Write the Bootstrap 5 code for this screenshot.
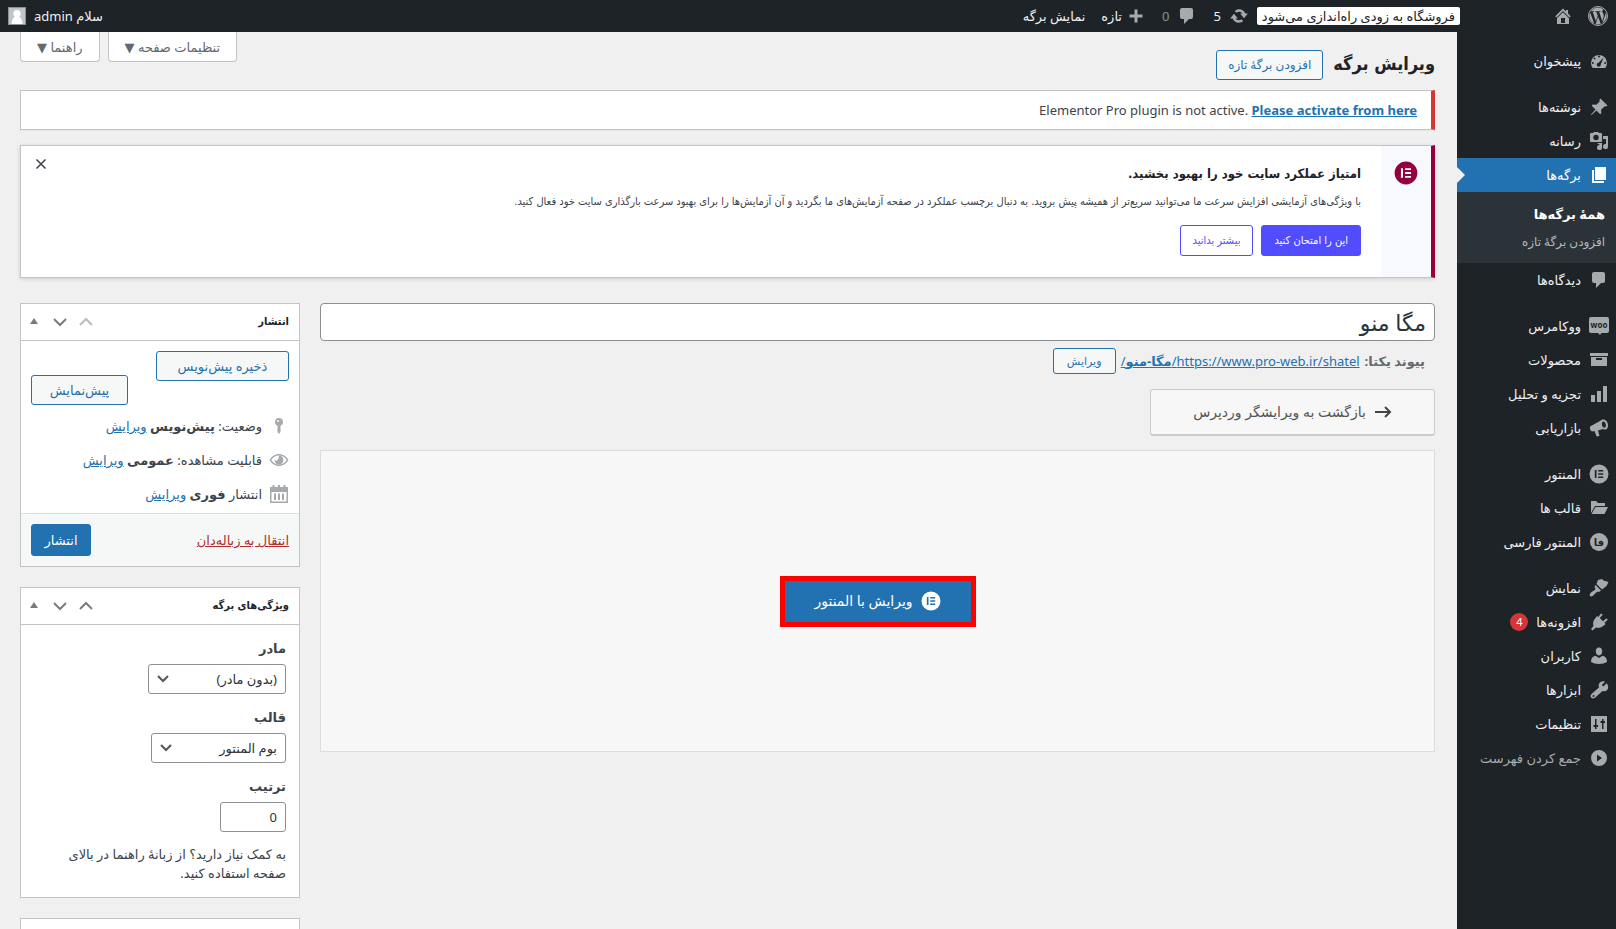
<!DOCTYPE html>
<html lang="fa" dir="rtl">
<head>
<meta charset="utf-8">
<meta name="viewport" content="width=device-width, initial-scale=1">
<title>ویرایش برگه</title>
<link rel="stylesheet" href="https://cdn.jsdelivr.net/npm/bootstrap@5.3.0/dist/css/bootstrap.min.css">
<style>
:root{--ink:#1d2327;--accent:#2271b1;--line:#c3c4c7;--narrow:"DejaVu Sans Condensed","DejaVu Sans",sans-serif}
body{background:#f0f0f1;color:#3c434a;font:13px/20px "Noto Sans","DejaVu Sans",sans-serif}
a{color:var(--accent)}
.ico{width:20px;height:20px;fill:#a7aaad;flex:none}
.topbar{height:32px;background:var(--ink);color:#f0f0f1;padding:0 8px;flex:none}
.topbar a{color:#f0f0f1;text-decoration:none}
.home-pair{width:148px;gap:15px}
.site-status{background:#fff;color:#1d2327!important;border-radius:2px;padding:0 5px;line-height:18px}
.avatar{width:18px;height:18px;background:#c3c4c7;border:1px solid #8c8f94}
.side{width:159px;flex:none;background:var(--ink);padding-top:12px}
.side ul{list-style:none;margin:0;padding:0}
.side a{display:flex;align-items:center;gap:8px;height:34px;padding:0 7px;color:#f0f0f1;text-decoration:none}
.side .gap-top{margin-top:12px}
.side .current{background:var(--accent);color:#fff;position:relative}
.side .current .ico{fill:#fff}
.side .current::after{content:"";position:absolute;left:0;top:9px;border:8px solid transparent;border-left-color:#f0f0f1}
.side .sub{background:#2c3338;padding:8px 0 7px}
.side .sub a{height:28px;padding:0 11px;color:#b4b9be;font-size:12px}
.side .sub a.on{color:#fff;font-weight:700;font-size:13px}
.side .collapse-link{color:#a7aaad}
.count{background:#d63638;color:#fff;width:18px;height:18px;border-radius:9px;font-size:11px;line-height:18px;text-align:center}
.main{padding:0 22px 0 20px}
.meta-tab{background:#fff;border:1px solid var(--line);border-top:0;border-radius:0 0 4px 4px;color:#646970;height:30px;padding:0 16px;font-size:13px}
.page-head{height:58px;padding-top:18px;gap:10px}
.page-head h1{font:700 18px/28px var(--narrow);color:var(--ink);margin:0}
.wpbtn{border:1px solid var(--accent);border-radius:3px;background:#f6f7f7;color:var(--accent);height:30px;padding:0 11px;font-size:12px;line-height:28px;text-decoration:none;white-space:nowrap}
.wpbtn.solid{background:var(--accent);color:#fff;height:32px;min-width:60px;font-size:13px}
.wpbtn.tiny{height:26px;padding:0 8px;font-size:11px;line-height:24px;min-width:63px}
.wpbtn.w-save{min-width:133px;font-size:13px}
.wpbtn.w-preview{min-width:97px;font-size:13px}
.notice{background:#fff;border:1px solid var(--line);box-shadow:0 1px 1px rgba(0,0,0,.04)}
.notice-bad{border-right:4px solid #d63638;height:40px;padding:0 14px}
.notice-el{border-right:4px solid #93003f;height:133px;box-shadow:0 1px 4px rgba(0,0,0,.15);margin-top:15px}
.notice-el .strip{width:50px;background:#f8f8ff;padding-top:15px}
.el-text{padding:18px 20px 0;font-family:var(--narrow)}
.notice-el h2{font-size:13px;line-height:20px;font-weight:700;color:#1d2327;margin:0}
.notice-el p{font-size:11px;line-height:20px;margin:8px 0 13px}
.elbtn{height:31px;border:1px solid #524cff;border-radius:3px;background:#fff;color:#524cff;font-size:11px;padding:0 12px}
.elbtn.solid{background:#524cff;color:#fff}
.plain{border:0;background:none;padding:0;line-height:0}
.workspace{gap:20px;margin-top:25px}
.aside-col{width:280px;flex:none}
.title-in{display:block;width:100%;height:38px;border:1px solid #8c8f94;border-radius:4px;background:#fff;color:#2c3338;padding:0 8px;font-size:22px}
.permalink{height:40px;padding:0 10px;gap:5px;color:#646970}
.backbtn{width:285px;height:47px;margin-top:8px;border:1px solid #ccc;border-bottom-width:2px;border-radius:3px;background:#f7f7f7;color:#555;font-size:14px}
.canvas-box{height:302px;margin-top:14px;background:#f7f7f7;border:1px solid #dcdcde}
.editbtn{width:196px;height:51px;border:5px solid #f00;background:var(--accent);color:#fff;font-size:14px}
.panel{background:#fff;border:1px solid var(--line);margin-bottom:20px}
.panel-top{height:37px;border-bottom:1px solid var(--line);padding:0 10px 0 3px}
.panel-top h2{font:700 11px/20px var(--narrow);color:#1d2327;margin:0}
.panel-top .ico{fill:none;stroke:#787c82;stroke-width:2}
.handles{gap:6px}
.publish-body{height:172px;padding:10px 10px 0}
.publish-body .rows{margin-top:4px}
.publish-body .line{height:34px;gap:7px}
.publish-foot{height:53px;background:#f6f7f7;border-top:1px solid #dcdcde;padding:0 10px}
.trash-link{color:#b32d2e}
.attr{padding:13px 13px 14px}
.attr label{display:block;font-weight:700;line-height:20px;margin-bottom:6px}
.attr select,.attr input{display:block;height:30px;border:1px solid #8c8f94;border-radius:3px;background:#fff;color:#2c3338;padding:0 8px;margin-bottom:13px}
.attr select{appearance:none;background:#fff url("data:image/svg+xml,%3Csvg xmlns='http://www.w3.org/2000/svg' viewBox='0 0 12 12' fill='none' stroke='%23555' stroke-width='2'%3E%3Cpath d='M1 3l5 5 5-5'/%3E%3C/svg%3E") 8px 8px/12px no-repeat}
.w-parent{width:138px}.w-tpl{width:135px}.w-order{width:66px}
.attr p{line-height:19px;margin:0}
</style>
</head>
<body>
<svg class="d-none" xmlns="http://www.w3.org/2000/svg">
<symbol id="wp" viewBox="0 0 16 16"><path d="M12.633 7.653c0-.848-.305-1.435-.566-1.892l-.08-.13c-.317-.51-.594-.958-.594-1.48 0-.63.478-1.218 1.152-1.218.02 0 .039.002.058.003l.031.003A6.838 6.838 0 0 0 8 1.137 6.855 6.855 0 0 0 2.266 4.23c.16.005.313.009.442.009.717 0 1.828-.087 1.828-.087.37-.022.414.521.044.565 0 0-.371.044-.785.065l2.5 7.434 1.5-4.506-1.07-2.929c-.369-.022-.719-.065-.719-.065-.37-.022-.326-.588.043-.566 0 0 1.134.087 1.808.087.718 0 1.83-.087 1.83-.087.37-.022.413.522.043.566 0 0-.372.043-.785.065l2.48 7.377.684-2.287.054-.173c.27-.86.469-1.495.469-2.046zM1.137 8a6.864 6.864 0 0 0 3.868 6.176L1.73 5.206A6.837 6.837 0 0 0 1.137 8zM6.061 14.583 8.121 8.6l2.109 5.78c.014.033.03.064.049.094a6.854 6.854 0 0 1-4.218.109zm7.96-9.876c.03.219.047.453.047.706 0 .696-.13 1.479-.522 2.458l-2.096 6.06a6.86 6.86 0 0 0 2.572-9.224z"/><circle cx="8" cy="8" r="7.6" fill="none" stroke="#a7aaad" stroke-width=".8"/></symbol>
<symbol id="home" viewBox="0 0 20 20"><path fill-rule="evenodd" d="M10 2.500l3 3V4h2v3.500l2.700 2.700-1.200 1.200L10 4.900l-6.500 6.500-1.200-1.200zM10 6.200l6 6V18H4v-5.800zM8 12v5h4v-5z"/></symbol>
<symbol id="sync" viewBox="0 0 20 20"><path d="M10.200 3.300c2.800 0 5.200 1.700 6.200 4.200h2.500l-3.900 4.800-3.900-4.800h2.400c-.7-1-1.900-1.700-3.300-1.700-1 0-2 .4-2.700 1L5.800 4.900c1.200-1 2.700-1.600 4.400-1.600zM9.800 16.700c-2.800 0-5.200-1.700-6.200-4.200H1.100L5 7.700l3.900 4.800H6.500c.7 1 1.900 1.700 3.300 1.700 1 0 2-.4 2.700-1l1.700 1.900c-1.200 1-2.700 1.600-4.400 1.600z"/></symbol>
<symbol id="talk" viewBox="0 0 20 20"><path d="M5 2h9q2 0 2 2v7q0 2-2 2h-2l-5 5v-5H5q-2 0-2-2V4q0-2 2-2z"/></symbol>
<symbol id="plus" viewBox="0 0 20 20"><path d="M8.500 3.500h3v5h5v3h-5v5h-3v-5h-5v-3h5z"/></symbol>
<symbol id="dash" viewBox="0 0 20 20"><path fill-rule="evenodd" d="M3.800 17h12.400A8 8 0 1 0 3.800 17zM10 4.500a1 1 0 1 1 0 2 1 1 0 0 1 0-2zM5.500 6.500a1 1 0 1 1 0 2 1 1 0 0 1 0-2zM3.800 11a1 1 0 1 1 0 2 1 1 0 0 1 0-2zM16.200 11a1 1 0 1 1 0 2 1 1 0 0 1 0-2zM14.700 6.500l-3 6.800a2 2 0 1 1-2.200-1.500z"/></symbol>
<symbol id="pin" viewBox="0 0 20 20"><path d="M10.400 3l1-1.500 7.100 7-1.500 1.100-1.600-.2-3.300 3.400.2 3.500-1.100 1-3.800-3.700L2.500 18l-.5-.5 4.500-5L2.700 8.800l1.100-1.200 3.500.2 3.400-3.300z"/></symbol>
<symbol id="media" viewBox="0 0 20 20"><path fill-rule="evenodd" d="M2 2h2l1-1h4l1 1h2q1 0 1 1v7q0 1-1 1H2q-1 0-1-1V3q0-1 1-1zm5 1.800a2.700 2.700 0 1 0 0 5.400 2.700 2.700 0 0 0 0-5.400z"/><path d="M14 5h5v10.500a2.500 2.500 0 1 1-2-2.400V8h-3zM8 12h5v4.500a2.500 2.500 0 1 1-2-2.400z"/></symbol>
<symbol id="pages" viewBox="0 0 20 20"><path d="M6 2h11v13H6zM3 5h2v11h10v2H3z"/></symbol>
<symbol id="woo" viewBox="0 0 20 20"><path d="M2 1h16q2 0 2 2v12q0 2-2 2h-5.500L11 19l-2-2H2q-2 0-2-2V3q0-2 2-2z"/><text x="10" y="12" font-size="8" font-weight="700" text-anchor="middle" fill="#1d2327" direction="ltr">woo</text></symbol>
<symbol id="box" viewBox="0 0 20 20"><path fill-rule="evenodd" d="M1 3h18v3H1zM2 7h16v9H2zm5 1v2h6V8z"/></symbol>
<symbol id="bars" viewBox="0 0 20 20"><path d="M2 11h4v7H2zM8 7h4v11H8zM14 2h4v16h-4z"/></symbol>
<symbol id="horn" viewBox="0 0 20 20"><path fill-rule="evenodd" d="M14.500 1.500c3.800 0 5.500 5.600 4 8.500-1 2-3 1.700-4.600 1L9 12.500l1.500 5.500-3 .5L5.500 13 3 13.500Q.5 12 1 8.500L11 3c.8-.9 2-1.500 3.500-1.500zm-.5 2c-2 1-1 5.500 1 6.200 3 .3 2.500-6-1-6.200z"/></symbol>
<symbol id="ele" viewBox="0 0 20 20"><path fill-rule="evenodd" d="M10 .5a9.500 9.500 0 1 1 0 19 9.500 9.500 0 0 1 0-19zM5.800 6v8h1.700V6zm3.400 0v1.600h5V6zm0 3.200v1.600h5V9.200zm0 3.200V14h5v-1.600z"/></symbol>
<symbol id="folder" viewBox="0 0 20 20"><path d="M2 3h5l2 2h7v3H6l-4 7zM6.500 9H19l-3.500 7h-13z"/></symbol>
<symbol id="fa" viewBox="0 0 20 20"><circle cx="10" cy="10" r="9"/><text x="10" y="14" font-size="10" font-weight="700" text-anchor="middle" fill="#1d2327">فا</text></symbol>
<symbol id="brush" viewBox="0 0 20 20"><path d="M9 2l4-1 1.500 1.500L19.500 4l-2 4-4.500 3.500L7.500 6zM6.500 7l5.500 5.500-2 1.500-1.500-.5C6.500 14.500 4.500 18 2.500 18.500c-1.300.3-2.300-1-1.500-2.500.5-2 5-3.500 5.500-5L5.500 9z"/></symbol>
<symbol id="plug" viewBox="0 0 20 20"><path d="M12 1.500q2 0 1.500 1.500L10.800 6l3.200 3.200L17 6.500q2 0 1.500 1.500l-3 2.700 1 1.300-1.500 1.500Q11 17 7 15.500L3.500 18.500 2 17l2.500-3Q3 9.500 7 5.500L8 4l1.300 1z"/></symbol>
<symbol id="user" viewBox="0 0 20 20"><path d="M10 1.500c2 0 3.200 1.500 3.200 3.800S12 9.500 10 9.500 6.800 7.600 6.800 5.300 8 1.500 10 1.500zM6.500 9.800L10 12l3.500-2.200q4.500 1 4.500 6.200-3 2-8 2t-8-2q0-5.200 4.500-6.200z"/></symbol>
<symbol id="wrench" viewBox="0 0 20 20"><path fill-rule="evenodd" d="M17.700 3.300l-3 3-1.200-.3-.5-1.300 3-3C14 .8 11.500 1.500 10.300 3.300c-.8 1.200-.8 2.800-.3 4.200L2.500 14c-2.500 2.800.7 6 3.500 3.700L13.500 11c5 1.500 7.500-3.500 4.200-7.700zM4.500 17a1 1 0 1 1 .1-2 1 1 0 0 1-.1 2z"/></symbol>
<symbol id="sliders" viewBox="0 0 20 20"><path fill-rule="evenodd" d="M2 2h16v16H2zm4 3v6H4.500v2H6v2h1.500v-2H9v-2H7.500V5zm7 0v2h-1.500v2H13v6h1.500V9H16V7h-1.500V5z"/></symbol>
<symbol id="play" viewBox="0 0 20 20"><path fill-rule="evenodd" d="M10 2a8 8 0 1 1 0 16 8 8 0 0 1 0-16zM8 6.500v7l5-3.500z"/></symbol>
<symbol id="key" viewBox="0 0 20 20"><path fill-rule="evenodd" d="M10 2a4 4 0 0 1 1.500 7.700V16L10 18l-1.500-2V9.700A4 4 0 0 1 10 2zm-1 2a1 1 0 1 0 0 2 1 1 0 0 0 0-2z"/></symbol>
<symbol id="eye" viewBox="0 0 20 20"><path fill-rule="evenodd" d="M10 4c4 0 7.500 2.500 9.500 6-2 3.500-5.500 6-9.500 6S2.500 13.500.5 10C2.500 6.500 6 4 10 4zm0 1.500c-3.500 0-6 2-7.800 4.500 1.800 2.500 4.300 4.500 7.800 4.500s6-2 7.800-4.500c-1.800-2.500-4.300-4.500-7.800-4.500z"/><path d="M10 5.500A4.500 4.500 0 1 1 5.500 10q2.500 1.500 3.500-.5T10 5.500z"/></symbol>
<symbol id="cal" viewBox="0 0 20 20"><path fill-rule="evenodd" d="M1 3h2.500V1h2v2h3.500V1h2v2h3.500V1h2v2H19v16H1zm1.500 5v9.500h15V8zM5 9.500h2V16H5zm4 0h2V16H9zm4 0h2V16h-2z"/></symbol>
<symbol id="up" viewBox="0 0 20 20"><path d="M4 13l6-6 6 6"/></symbol>
<symbol id="down" viewBox="0 0 20 20"><path d="M4 7l6 6 6-6"/></symbol>
<symbol id="tri" viewBox="0 0 20 20"><path d="M6 12h8l-4-6z" fill="#787c82" stroke="none"/></symbol>
</svg>

<div class="vh-100 d-flex flex-column overflow-hidden">
<header class="topbar d-flex align-items-center">
  <div class="home-pair d-flex align-items-center">
    <a href="#" aria-label="وردپرس"><svg class="ico d-block"><use href="#wp"/></svg></a>
    <a href="#" aria-label="خانه"><svg class="ico d-block"><use href="#home"/></svg></a>
  </div>
  <nav class="d-flex align-items-center gap-3">
    <div class="d-flex align-items-center gap-2">
      <a href="#" class="site-status">فروشگاه به زودی راه‌اندازی می‌شود</a>
      <a href="#" class="d-flex gap-2"><svg class="ico"><use href="#sync"/></svg>5</a>
    </div>
    <a href="#" class="d-flex gap-2"><svg class="ico"><use href="#talk"/></svg><span class="opacity-50">0</span></a>
    <a href="#" class="d-flex gap-1"><svg class="ico"><use href="#plus"/></svg>تازه</a>
    <a href="#">نمایش برگه</a>
  </nav>
  <a href="#" class="d-flex align-items-center gap-2 me-auto"><span>سلام admin</span>
    <svg class="avatar" viewBox="0 0 16 16"><path fill="#fff" d="M8 2a3.500 3.500 0 0 1 2 6.500q3 1.500 3.500 7.500h-11Q3 10 6 8.500A3.500 3.500 0 0 1 8 2z"/></svg></a>
</header>

<div class="d-flex flex-grow-1">
<nav class="side">
  <ul>
    <li><a href="#"><svg class="ico"><use href="#dash"/></svg>پیشخوان</a></li>
    <li class="gap-top"><a href="#"><svg class="ico"><use href="#pin"/></svg>نوشته‌ها</a></li>
    <li><a href="#"><svg class="ico"><use href="#media"/></svg>رسانه</a></li>
    <li><a href="#" class="current"><svg class="ico"><use href="#pages"/></svg>برگه‌ها</a>
      <ul class="sub"><li><a href="#" class="on">همهٔ برگه‌ها</a></li><li><a href="#">افزودن برگهٔ تازه</a></li></ul></li>
    <li><a href="#"><svg class="ico"><use href="#talk"/></svg>دیدگاه‌ها</a></li>
    <li class="gap-top"><a href="#"><svg class="ico"><use href="#woo"/></svg>ووکامرس</a></li>
    <li><a href="#"><svg class="ico"><use href="#box"/></svg>محصولات</a></li>
    <li><a href="#"><svg class="ico"><use href="#bars"/></svg>تجزیه و تحلیل</a></li>
    <li><a href="#"><svg class="ico"><use href="#horn"/></svg>بازاریابی</a></li>
    <li class="gap-top"><a href="#"><svg class="ico"><use href="#ele"/></svg>المنتور</a></li>
    <li><a href="#"><svg class="ico"><use href="#folder"/></svg>قالب ها</a></li>
    <li><a href="#"><svg class="ico"><use href="#fa"/></svg>المنتور فارسی</a></li>
    <li class="gap-top"><a href="#"><svg class="ico"><use href="#brush"/></svg>نمایش</a></li>
    <li><a href="#"><svg class="ico"><use href="#plug"/></svg>افزونه‌ها<span class="count">4</span></a></li>
    <li><a href="#"><svg class="ico"><use href="#user"/></svg>کاربران</a></li>
    <li><a href="#"><svg class="ico"><use href="#wrench"/></svg>ابزارها</a></li>
    <li><a href="#"><svg class="ico"><use href="#sliders"/></svg>تنظیمات</a></li>
    <li><a href="#" class="collapse-link"><svg class="ico"><use href="#play"/></svg>جمع کردن فهرست</a></li>
  </ul>
</nav>

<main class="main flex-grow-1">
  <div class="d-flex justify-content-between align-items-start">
    <div class="page-head d-flex align-items-start">
      <h1>ویرایش برگه</h1>
      <a href="#" class="wpbtn">افزودن برگهٔ تازه</a>
    </div>
    <div class="d-flex gap-2">
      <button type="button" class="meta-tab">تنظیمات صفحه ▼</button>
      <button type="button" class="meta-tab">راهنما ▼</button>
    </div>
  </div>

  <div class="notice notice-bad d-flex align-items-center">
    <div dir="ltr">Elementor Pro plugin is not active. <a href="#" class="fw-bold">Please activate from here</a></div>
  </div>

  <section class="notice notice-el d-flex">
    <div class="strip d-flex justify-content-center"><svg class="ico" style="width:24px;height:24px;fill:#93003f"><use href="#ele"/></svg></div>
    <div class="flex-grow-1 el-text">
      <h2>امتیاز عملکرد سایت خود را بهبود بخشید.</h2>
      <p>با ویژگی‌های آزمایشی افزایش سرعت ما می‌توانید سریع‌تر از همیشه پیش بروید. به دنبال برچسب عملکرد در صفحه آزمایش‌های ما بگردید و آن آزمایش‌ها را برای بهبود سرعت بارگذاری سایت خود فعال کنید.</p>
      <div class="d-flex gap-2"><button type="button" class="elbtn solid">این را امتحان کنید</button><button type="button" class="elbtn">بیشتر بدانید</button></div>
    </div>
    <div class="px-2 pt-1"><button type="button" class="plain p-1" aria-label="بستن"><svg width="16" height="16" viewBox="0 0 16 16" stroke="#3c434a" stroke-width="1.500"><path d="M3.500 5.500l9 9M12.500 5.500l-9 9"/></svg></button></div>
  </section>

  <div class="workspace d-flex align-items-start">
    <div class="flex-grow-1">
      <input class="title-in" type="text" value="مگا منو" aria-label="عنوان">
      <div class="permalink d-flex align-items-center">
        <strong>پیوند یکتا:</strong>
        <a href="#">https://www.pro-web.ir/shatel/<b>مگا-منو</b>/</a>
        <button type="button" class="wpbtn tiny">ویرایش</button>
      </div>
      <button type="button" class="backbtn d-flex align-items-center justify-content-center gap-2">
        <svg width="18" height="18" viewBox="0 0 18 18" fill="none" stroke="#444" stroke-width="2"><path d="M1 9h15M11 4l5 5-5 5"/></svg><span>بازگشت به ویرایشگر وردپرس</span></button>
      <div class="canvas-box d-flex align-items-center justify-content-center">
        <button type="button" class="editbtn d-flex align-items-center justify-content-center gap-2"><svg class="ico" style="fill:#fff"><use href="#ele"/></svg><span>ویرایش با المنتور</span></button>
      </div>
    </div>

    <div class="aside-col">
      <section class="panel">
        <div class="panel-top d-flex align-items-center justify-content-between"><h2>انتشار</h2>
          <div class="d-flex handles"><button type="button" class="plain opacity-50" aria-label="بالا"><svg class="ico"><use href="#up"/></svg></button><button type="button" class="plain" aria-label="پایین"><svg class="ico"><use href="#down"/></svg></button><button type="button" class="plain" aria-label="بستن"><svg class="ico"><use href="#tri"/></svg></button></div></div>
        <div class="publish-body">
          <div class="d-flex justify-content-between"><button type="button" class="wpbtn w-save">ذخیره پیش‌نویس</button><button type="button" class="wpbtn w-preview mt-4">پیش‌نمایش</button></div>
          <div class="rows">
            <div class="line d-flex align-items-center"><svg class="ico"><use href="#key"/></svg><div>وضعیت: <b>پیش‌نویس</b> <a href="#">ویرایش</a></div></div>
            <div class="line d-flex align-items-center"><svg class="ico"><use href="#eye"/></svg><div>قابلیت مشاهده: <b>عمومی</b> <a href="#">ویرایش</a></div></div>
            <div class="line d-flex align-items-center"><svg class="ico"><use href="#cal"/></svg><div>انتشار <b>فوری</b> <a href="#">ویرایش</a></div></div>
          </div>
        </div>
        <div class="publish-foot d-flex align-items-center justify-content-between"><a href="#" class="trash-link">انتقال به زباله‌دان</a><button type="button" class="wpbtn solid">انتشار</button></div>
      </section>
      <section class="panel">
        <div class="panel-top d-flex align-items-center justify-content-between"><h2>ویژگی‌های برگه</h2>
          <div class="d-flex handles"><button type="button" class="plain" aria-label="بالا"><svg class="ico"><use href="#up"/></svg></button><button type="button" class="plain" aria-label="پایین"><svg class="ico"><use href="#down"/></svg></button><button type="button" class="plain" aria-label="بستن"><svg class="ico"><use href="#tri"/></svg></button></div></div>
        <div class="attr">
          <label for="parent">مادر</label><select id="parent" class="w-parent"><option>(بدون مادر)</option></select>
          <label for="tpl">قالب</label><select id="tpl" class="w-tpl"><option>بوم المنتور</option></select>
          <label for="order">ترتیب</label><input id="order" class="w-order" type="text" value="0">
          <p>به کمک نیاز دارید؟ از زبانهٔ راهنما در بالای صفحه استفاده کنید.</p>
        </div>
      </section>
      <section class="panel"><div class="panel-top"></div></section>
    </div>
  </div>
</main>
</div>
</div>
<script src="https://cdn.jsdelivr.net/npm/bootstrap@5.3.0/dist/js/bootstrap.bundle.min.js"></script>
</body>
</html>
